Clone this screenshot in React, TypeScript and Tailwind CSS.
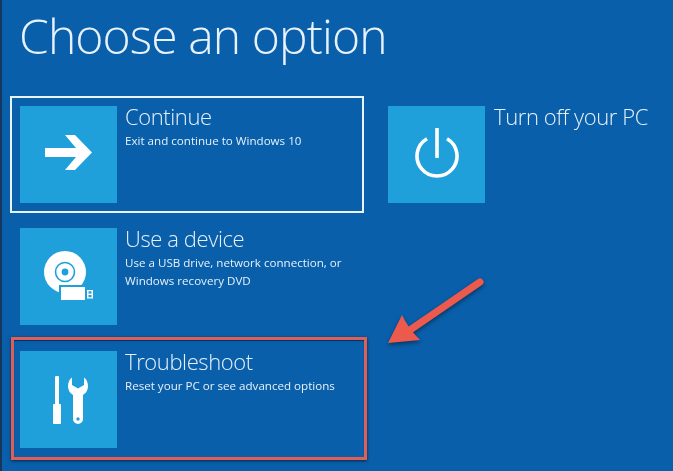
import React from 'react';

const fontStack = "font-['Open_Sans','Noto_Sans',sans-serif]";

const ArrowIcon = () => (
  <svg width="47" height="39" viewBox="0 0 47 39" fill="white">
    <path d="M0 13H31L20 0H30L47 17.5 30 35H20L31 22H0Z" />
  </svg>
);

const DeviceIcon = () => (
  <svg width="49" height="51" viewBox="0 0 49 51">
    <circle cx="21" cy="21" r="21" fill="white" />
    <rect x="15" y="34" width="34" height="17" fill="#1fa0db" />
    <circle cx="21" cy="21" r="9.5" fill="none" stroke="#1fa0db" strokeWidth="1.6" />
    <circle cx="21" cy="21" r="3.4" fill="#1fa0db" />
    <rect x="17" y="36" width="24" height="13" fill="white" />
    <rect x="43" y="39" width="6" height="8.5" fill="white" />
    <rect x="44.5" y="40.3" width="3" height="2.3" fill="#1fa0db" />
    <rect x="44.5" y="44" width="3" height="2.3" fill="#1fa0db" />
  </svg>
);

const ToolsIcon = () => (
  <svg width="39" height="48" viewBox="-4 0 39 48" fill="white">
    <rect x="2" y="0" width="4" height="29" rx="1.2" />
    <rect x="0" y="28" width="8" height="20" rx="1" />
    <path d="M19 1.5V9L25 12.5 31 9V1.5C33.5 3 35 6.5 35 10 35 14.5 32.5 17.5 30 19V43A5 5 0 0 1 20 43V19C17.5 17.5 15 14.5 15 10 15 6.5 16.5 3 19 1.5Z" />
    <circle cx="25" cy="43" r="1.7" fill="#1fa0db" />
  </svg>
);

const PowerIcon = () => (
  <svg width="44" height="54" viewBox="0 0 44 54" fill="none" stroke="white" strokeWidth="3.6">
    <path d="M22 0V30" />
    <path d="M12 10.7a20 20 0 1 0 20 0" />
  </svg>
);

const Tile = ({ children }: { children: React.ReactNode }) => (
  <div className="w-[97px] h-[97px] shrink-0 bg-[#1fa0db] flex items-center justify-center">{children}</div>
);

const OptionText = ({ title, desc }: { title: string; desc?: React.ReactNode }) => (
  <div className="pl-2 text-[#e6f1fa]">
    <div className="text-[22px] leading-[24px] font-light tracking-[-0.4px] -mt-[2px]">{title}</div>
    {desc && <div className="text-[11.6px] leading-[18px] mt-[4px]">{desc}</div>}
  </div>
);

export default function App() {
  return (
    <div className={`relative w-[673px] h-[471px] overflow-hidden bg-[#0a5fab] border-l-2 border-[#16375c] blur-[0.35px] ${fontStack}`}>
      <h1 className="pl-[17px] pt-[7px] h-[96px] text-[48px] leading-[58px] font-light tracking-[-0.9px] text-[#e8f2fb]">Choose an option</h1>

      <div className="flex">
        <div className="w-[368px] pl-[8px] flex flex-col">
          <div className="flex w-[354px] p-[8px] border-2 border-[#e9f3fb]">
            <Tile><ArrowIcon /></Tile>
            <OptionText title="Continue" desc="Exit and continue to Windows 10" />
          </div>

          <div className="flex w-[354px] mt-[5px] p-[8px] border-2 border-transparent">
            <Tile><DeviceIcon /></Tile>
            <OptionText
              title="Use a device"
              desc={<>Use a USB drive, network connection, or<br />Windows recovery DVD</>}
            />
          </div>

          <div className="flex w-[356px] mt-[2px] ml-[1px] pl-[6px] pt-[11px] pb-[9px] border-[3px] border-[#de5f58] shadow-[0_1px_3px_rgba(0,0,0,0.6),inset_0_1px_1px_rgba(0,0,0,0.5)]">
            <Tile><ToolsIcon /></Tile>
            <OptionText title="Troubleshoot" desc="Reset your PC or see advanced options" />
          </div>
        </div>

        <div className="pl-[18px] pt-[10px] flex items-start">
          <Tile><PowerIcon /></Tile>
          <div className="pl-px">
            <OptionText title="Turn off your PC" />
          </div>
        </div>
      </div>

      {/* red callout arrow */}
      <svg className="absolute left-[376px] top-[270px]" width="120" height="90" viewBox="0 0 120 90">
        <g className="drop-shadow-[0_2px_2px_rgba(0,0,0,0.45)]">
          <path d="M102 12L32 60" stroke="#ec5a4e" strokeWidth="7" strokeLinecap="round" fill="none" />
          <path d="M10 73L24 45Q30 58 42 70Z" fill="#ec5a4e" />
        </g>
      </svg>
    </div>
  );
}
